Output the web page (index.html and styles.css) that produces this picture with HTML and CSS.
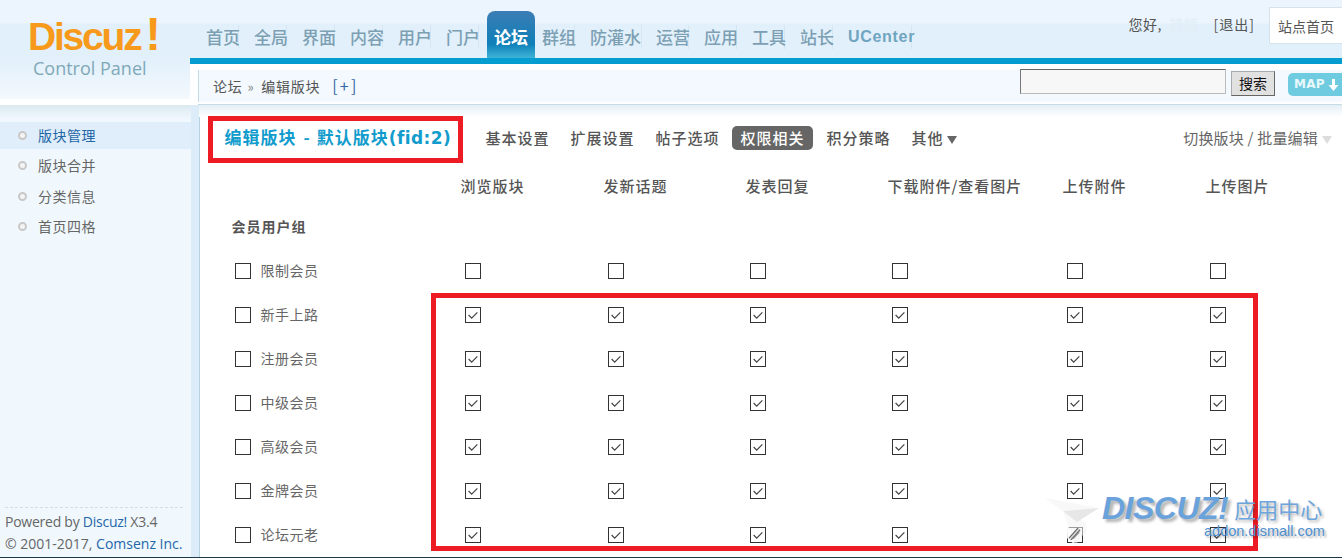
FILE: index.html
```html
<!DOCTYPE html>
<html lang="zh-CN">
<head>
  <meta charset="UTF-8" />
  <title>Discuz! Control Panel</title>
  <link rel="stylesheet" href="styles.css">
</head>
<body>
  <svg class="defs" width="0" height="0">
    <symbol id="tick" viewBox="0 0 16 16"><path d="M3 8 6.500 11.500 13 5" fill="none" stroke="#444" stroke-width="1.400"/></symbol>
  </svg>

  <header class="head">
    <div class="logo">
      <div class="logo-name">Discuz<span class="logo-bang">!</span></div>
      <div class="logo-sub">Control Panel</div>
    </div>
    <div class="head-right">
      <div class="topbar">
        <ul class="nav">
          <li>首页</li><li>全局</li><li>界面</li><li>内容</li><li>用户</li><li>门户</li>
          <li class="on">论坛</li>
          <li>群组</li><li>防灌水</li><li>运营</li><li>应用</li><li>工具</li><li>站长</li>
          <li class="uc">UCenter</li>
        </ul>
        <div class="user">
          <span class="hello">您好, <span class="uname">詩語</span></span>
          <span class="logout">[退出]</span>
          <span class="home">站点首页</span>
        </div>
      </div>
      <div class="crumbs">
        <div class="crumb-text">论坛<span class="raquo">»</span>编辑版块<span class="plus">[+]</span></div>
        <div class="search">
          <input class="search-input" type="text">
          <span class="search-btn">搜索</span>
          <span class="map">MAP<svg width="11" height="12" viewBox="0 0 11 12"><path d="M4 0h3v6h3.500L5.500 12 .5 6H4z" fill="#fff"/></svg></span>
        </div>
      </div>
    </div>
  </header>

  <div class="body">
    <aside class="side">
      <ul class="menu">
        <li class="on">版块管理</li>
        <li>版块合并</li>
        <li>分类信息</li>
        <li>首页四格</li>
      </ul>
      <div class="copy">
        <p class="powered">Powered by <a>Discuz!</a> X3.4</p>
        <p>© 2001-2017, <a>Comsenz Inc.</a></p>
      </div>
    </aside>

    <main class="main">
      <div class="tabs">
        <h1 class="title">编辑版块<span class="title-dash">-</span>默认版块<span class="title-fid">(fid:2)</span></h1>
        <span class="tab">基本设置</span>
        <span class="tab">扩展设置</span>
        <span class="tab">帖子选项</span>
        <span class="tab on">权限相关</span>
        <span class="tab">积分策略</span>
        <span class="tab">其他<i class="arrow"></i></span>
        <span class="switch">切换版块 / 批量编辑<i class="arrow pale"></i></span>
      </div>

      <div class="perm">
        <div></div>
        <div class="th">浏览版块</div><div class="th">发新话题</div><div class="th">发表回复</div>
        <div class="th">下载附件/查看图片</div><div class="th">上传附件</div><div class="th">上传图片</div>
      </div>
      <div class="perm group"><div class="group-name">会员用户组</div></div>
      <div id="rows"></div>
    </main>
  </div>

  <div class="mark mark-title"></div>
  <div class="mark mark-grid"></div>

  <div class="stamp">
    <svg class="stamp-plane" width="62" height="48" viewBox="0 0 62 48">
      <path d="M0 0 54 10 18 13 41 24 42 34 37 38 30 48Z" fill="#f2f2f2" fill-opacity=".55"/>
      <path d="M0 0 18 13 30 47 22 40Z" fill="#fff" fill-opacity=".9"/>
      <path d="M18 13 54 10 32 24Z" fill="#e4e4e4" fill-opacity=".9"/>
      <path d="M34 31 25 41" stroke="#666" stroke-width="4" fill="none"/>
      <path d="M34 31 25 41" stroke="#ddd" stroke-width="1.500" fill="none"/>
    </svg>
    <div class="stamp-text">
      <div class="stamp-top"><span class="stamp-name">DISCUZ!</span><span class="stamp-cn">应用中心</span></div>
      <div class="stamp-url">addon.dismall.com</div>
    </div>
  </div>

  <script>
    const groups = ['限制会员', '新手上路', '注册会员', '中级会员', '高级会员', '金牌会员', '论坛元老'];
    const rows = document.getElementById('rows');
    groups.forEach((name, i) => {
      let html = `<div class="rowname"><span class="box"></span>${name}</div>`;
      for (let c = 0; c < 6; c++) {
        html += '<div><span class="box">' + (i ? '<svg width="14" height="14"><use href="#tick"/></svg>' : '') + '</span></div>';
      }
      const row = document.createElement('div');
      row.className = 'perm row';
      row.innerHTML = html;
      rows.appendChild(row);
    });
  </script>
</body>
</html>
```
FILE: styles.css
```css
html, body { margin: 0; padding: 0; height: 100%; overflow: hidden; }
body {
  display: flex; flex-direction: column;
  position: relative;
  box-sizing: border-box;
  border-bottom: 1px solid #1c3a4c;
  font-family: "Noto Sans CJK SC", "Liberation Sans", sans-serif;
  font-size: 14px;
  color: #555;
  background: #fff;
}
ul { list-style: none; margin: 0; padding: 0; }
p { margin: 0; }
.defs { position: absolute; }

/* header */
.head { display: flex; flex: 0 0 105px; }
.logo {
  flex: 0 0 190px;
  height: 99px;
  box-sizing: border-box;
  padding: 15px 0 0 28px;
  background: linear-gradient(#ecf5fd 0, #ecf5fd 23px, #e2f0fb 24px, #e2f0fb 60px, #f4f9fd 99px);
}
.logo-name {
  font: bold 39px/42px "Liberation Sans", sans-serif;
  letter-spacing: -2.200px;
  color: #f79a1c;
}
.logo-bang { margin-left: 5px; font-size: 46px; line-height: 38px; }
.logo-sub {
  margin: 0 0 0 5px;
  font: 18px/20px "Open Sans", sans-serif;
  color: #7fa9b8;
}
.head-right { flex: 1; min-width: 0; padding-left: 9px; box-shadow: inset 1px 0 0 #fff; }
.topbar {
  display: flex; justify-content: space-between;
  height: 58px;
  margin-left: -9px;
  border-bottom: 6px solid #059dcf;
  background: linear-gradient(#ecf5fd 0, #ecf5fd 23px, #e2f0fb 24px);
}
.nav { display: flex; padding: 11px 0 0 9px; }
.nav li {
  position: relative;
  width: 48px;
  box-sizing: border-box;
  height: 47px;
  padding: 14px 0 0 7px;
  font-size: 17px;
  line-height: 24px;
  font-weight: 500;
  color: #7c9fb3;
  background: linear-gradient(#d6e6f1, #d6e6f1) no-repeat 39px 14px / 1px 24px;
}
.nav li:nth-child(9) { width: 66px; padding-right: 0; background-position: 58px 14px; }
.nav li.on {
  width: 48px;
  border-radius: 8px 8px 0 0;
  font-weight: 700;
  color: #fff;
  background: linear-gradient(#3d7db5, #0e7fb8 70%, #3fb4d8);
}
.nav li.uc {
  width: 74px;
  font: bold 16px/24px "Liberation Sans", sans-serif;
  letter-spacing: .7px;
  color: #6fa5c0;
  background-position: 70px 14px;
}
.user { display: flex; align-items: flex-start; font-size: 14px; line-height: 20px; color: #555; }
.hello { margin-top: 14px; letter-spacing: .5px; }
.uname { color: #e2eef6; font-weight: 700; padding: 0 12px 0 4px; }
.logout { margin: 14px 0 0 3px; letter-spacing: 1px; }
.home {
  width: 73px; height: 37px;
  box-sizing: border-box;
  margin: 7px 0 0 14px;
  padding: 8px 0 0 8px;
  background: #fff;
  border: 1px solid #d5e3ea;
  border-right: 0;
  white-space: nowrap;
  overflow: hidden;
}
.crumbs {
  display: flex; justify-content: space-between;
  height: 32px;
  margin: 6px 0 0 -1px;
  background: #f3f9fe;
  box-shadow: 0 2px 0 #fff, 0 3px 0 #c5dbe6, inset 1px 0 0 #c5dbe6;
}
.crumb-text { padding: 5px 0 0 15px; line-height: 20px; letter-spacing: .7px; color: #555; }
.raquo { margin: 0 7px 0 5px; color: #888; font-size: 13px; }
.plus { margin-left: 12px; font-size: 16px; color: #3467a6; letter-spacing: 2.300px; }
.search { display: flex; align-items: flex-start; }
.search-input {
  width: 206px; height: 25px;
  box-sizing: border-box;
  margin: -1px 0 0 0;
  padding: 0;
  background: #f7f7f7;
  border: 1px solid #bbb;
  border-top-color: #666;
  border-left-color: #777;
}
.search-btn {
  width: 44px; height: 25px;
  box-sizing: border-box;
  margin: 1px 0 0 5px;
  background: #e1e1e1;
  border: 1px solid #aaa;
  border-right-color: #666;
  border-bottom-color: #666;
  font-size: 14px; line-height: 22px;
  text-align: center;
  color: #111;
}
.map {
  display: flex; align-items: center; gap: 3px;
  width: 54px; height: 23px;
  box-sizing: border-box;
  margin: 3px 0 0 13px;
  padding-left: 6px;
  border-radius: 5px 0 0 5px;
  background: #6fcbe0;
  font: bold 12px/23px "DejaVu Sans", sans-serif;
  color: #e8f8fb;
  letter-spacing: .3px;
  overflow: hidden;
}

/* body */
.body { display: flex; flex: 1; min-height: 0; }
.side {
  flex: 0 0 198px;
  display: flex; flex-direction: column;
  box-sizing: border-box;
  padding-top: 17px;
  background: linear-gradient(#dce9f0 0, #f0f8fd 14px);
  border-right: 8px solid #dcedf9;
  box-shadow: 1px 0 0 #b5d2e0;
}
.menu li {
  height: 30px;
  padding-left: 38px;
  line-height: 27px;
  letter-spacing: .5px;
  color: #666;
  position: relative;
}
.menu li:nth-child(3) { margin-top: 1px; }
.menu li::before {
  content: '';
  position: absolute; left: 18px; top: 9px;
  width: 9px; height: 9px;
  box-sizing: border-box;
  border-radius: 50%;
  background: #f4f4f4;
  border: 2px solid #c8c8c8;
}
.menu li.on { height: 27px; margin-bottom: 3px; background: #dfeefa; color: #2366a8; }
.copy {
  margin: auto 8px 0 5px;
  padding: 3px 0 2px;
  border-top: 1px dashed #d5dde2;
  font: 14px/22px "Open Sans", sans-serif;
  color: #666;
  white-space: nowrap;
}
.powered { letter-spacing: -.25px; }
.copy a { color: #2366a8; }

.main {
  flex: 1; min-width: 0;
  padding: 0 0 0 33px;
  background: linear-gradient(#e4eff5 0, #fff 12px) no-repeat 0 0 / 100% 12px;
  overflow: hidden;
}
.tabs {
  display: flex; align-items: center;
  height: 69px;
  box-sizing: border-box;
  margin-left: -7px;
  padding-bottom: 4px;
}
.title {
  margin: 0 34px 0 0;
  width: 227px;
  font-size: 17px; font-weight: 700; line-height: 24px;
  letter-spacing: 1px;
  color: #119ccd;
  white-space: nowrap;
}
.title-dash { margin: 0 6px 0 7px; }
.title-fid { font: bold 17px/24px "DejaVu Sans", sans-serif; letter-spacing: .4px; }
.tab {
  margin-right: 21px;
  font-size: 15px; line-height: 24px; font-weight: 500;
  letter-spacing: 1px;
  color: #555;
  white-space: nowrap;
}
.tab.on {
  padding: 0 8px 0 9px;
  margin: 0 14px 0 -9px;
  border-radius: 5px;
  background: #666;
  color: #fff;
}
.arrow {
  display: inline-block;
  margin-left: 3px;
  border: 5px solid transparent;
  border-top: 8px solid #666;
  border-bottom: 0;
}
.arrow.pale { border-top-color: #ddd; margin-left: 4px; }
.switch {
  margin-left: auto;
  padding-right: 10px;
  font-size: 15px; letter-spacing: .2px;
  color: #666;
  white-space: nowrap;
}

/* permission grid */
.perm {
  display: grid;
  grid-template-columns: 228px 143px 142px 142px 175px 143px 136px;
}
.th {
  padding-left: 1px;
  font-size: 15px; line-height: 24px; font-weight: 500;
  letter-spacing: 1px;
  color: #555;
  white-space: nowrap;
}
.group { height: 33px; margin-top: 18px; }
.group-name { font-weight: 700; line-height: 20px; letter-spacing: 1px; color: #555; white-space: nowrap; }
.row { height: 44px; align-items: center; }
.row > div { display: flex; align-items: center; padding-left: 5px; }
.row .rowname {
  padding: 0 0 2px 3px;
  letter-spacing: .5px;
  color: #666;
  white-space: nowrap;
}
.rowname .box { margin: 0 10px -2px 0; }
.box {
  display: flex; align-items: center; justify-content: center;
  width: 16px; height: 16px;
  box-sizing: border-box;
  border: 1.4px solid #333;
  background: #fff;
}

/* red marks drawn over the shot */
.mark { position: absolute; box-sizing: border-box; border: 5px solid #ed1c24; pointer-events: none; }
.mark-title { left: 208px; top: 116px; width: 255px; height: 47px; }
.mark-grid { left: 431px; top: 293px; width: 827px; height: 258px; }

/* watermark */
.stamp { position: absolute; left: 1045px; top: 493px; display: flex; }
.stamp-plane { margin-top: 5px; }
.stamp-text { margin-left: -5px; }
.stamp-top { display: flex; align-items: center; height: 30px; white-space: nowrap; }
.stamp-name {
  font: italic bold 32px/30px "Liberation Sans", sans-serif;
  letter-spacing: -.5px;
  color: #6aa3dc;
  text-shadow: 3px 3px 3px rgba(0,0,0,.3);
}
.stamp-cn {
  margin-left: 6px;
  font-size: 22px; line-height: 30px;
  color: #6ea5dc;
  text-shadow: 2px 2px 3px rgba(0,0,0,.3);
}
.stamp-url {
  margin-left: 102px;
  font: 14.500px/17px "Liberation Sans", sans-serif;
  color: #4f8fcf;
  text-shadow: 2px 2px 2px rgba(0,0,0,.3);
  white-space: nowrap;
}
```
